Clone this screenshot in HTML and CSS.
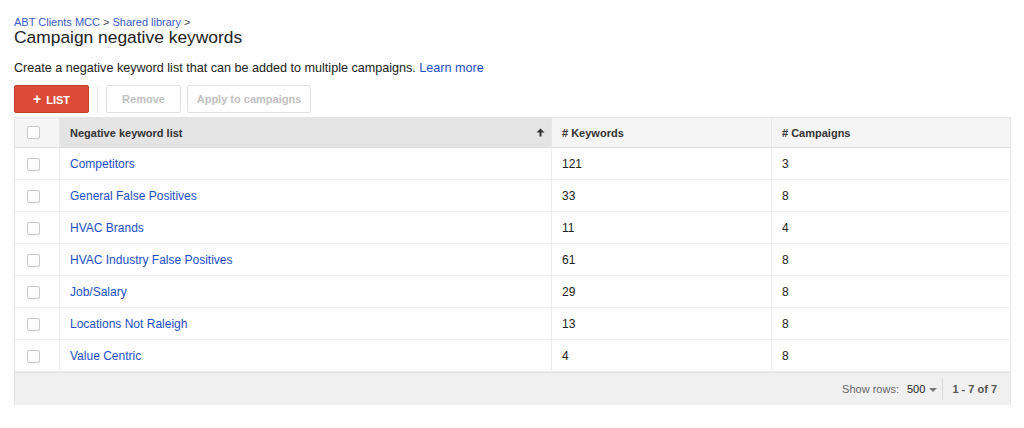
FILE: index.html
```html
<!DOCTYPE html>
<html lang="en">
<head>
  <meta charset="UTF-8">
  <title>Campaign negative keywords</title>
  <link rel="stylesheet" href="styles.css">
</head>
<body>

<div class="page">
  <div class="crumbs"><a href="#">ABT Clients MCC</a> &gt; <a href="#">Shared library</a> &gt;</div>
  <h1>Campaign negative keywords</h1>
  <p class="intro">Create a negative keyword list that can be added to multiple campaigns. <a href="#">Learn more</a></p>

  <div class="toolbar">
    <button class="add-btn"><span class="plus">+</span> LIST</button>
    <span class="divider"></span>
    <button class="plain-btn remove-btn" disabled>Remove</button>
    <button class="plain-btn apply-btn" disabled>Apply to campaigns</button>
  </div>

  <div class="grid-wrap">
    <table class="grid">
      <thead>
        <tr>
          <th class="col-check"><span class="box"></span></th>
          <th class="col-name sorted">
            Negative keyword list
            <svg class="sort" width="9" height="9" viewBox="0 0 9 9"><path d="M4.5 0.5 L8.5 4.5 L5.5 4.5 L5.5 8.5 L3.5 8.5 L3.5 4.5 L0.5 4.5 Z" fill="#333"/></svg>
          </th>
          <th class="col-kw"># Keywords</th>
          <th class="col-camp"># Campaigns</th>
        </tr>
      </thead>
      <tbody>
        <tr><td class="col-check"><span class="box"></span></td><td><a href="#">Competitors</a></td><td>121</td><td>3</td></tr>
        <tr><td class="col-check"><span class="box"></span></td><td><a href="#">General False Positives</a></td><td>33</td><td>8</td></tr>
        <tr><td class="col-check"><span class="box"></span></td><td><a href="#">HVAC Brands</a></td><td>11</td><td>4</td></tr>
        <tr><td class="col-check"><span class="box"></span></td><td><a href="#">HVAC Industry False Positives</a></td><td>61</td><td>8</td></tr>
        <tr><td class="col-check"><span class="box"></span></td><td><a href="#">Job/Salary</a></td><td>29</td><td>8</td></tr>
        <tr><td class="col-check"><span class="box"></span></td><td><a href="#">Locations Not Raleigh</a></td><td>13</td><td>8</td></tr>
        <tr><td class="col-check"><span class="box"></span></td><td><a href="#">Value Centric</a></td><td>4</td><td>8</td></tr>
      </tbody>
    </table>
    <div class="grid-foot">
      <span class="rows-label">Show rows:</span>
      <span class="rows-value">500 <span class="caret"></span></span>
      <span class="foot-sep"></span>
      <span class="range">1 - 7 of 7</span>
    </div>
  </div>
</div>

</body>
</html>
```

FILE: styles.css
```css
body {
  margin: 0;
  font-family: 'Liberation Sans', Arial, sans-serif;
  color: #222;
  background: #fff;
}

a {
  color: #1a4fc7;
  text-decoration: none;
}

.page {
  padding: 15px 15px 0 14px;
}

.crumbs {
  font-size: 11px;
  line-height: 14px;
  color: #444;
}

.crumbs a {
  color: #3a5bc7;
}

h1 {
  margin: -1px 0 0;
  font-size: 17.4px;
  font-weight: normal;
  line-height: 18px;
  color: #222;
}

.intro {
  margin: 14px 0 0;
  font-size: 12.6px;
  line-height: 16px;
  color: #222;
}

.toolbar {
  display: flex;
  align-items: center;
  gap: 6px;
  margin-top: 9px;
  height: 28px;
}

.add-btn {
  width: 75px;
  height: 28px;
  border: 1px solid #c4412f;
  border-radius: 2px;
  background: #dc4a38;
  color: #fff;
  font-family: inherit;
  font-size: 11px;
  font-weight: bold;
  padding: 0;
}

.add-btn .plus {
  font-size: 14px;
  margin-right: 2px;
}

.divider {
  width: 1px;
  height: 27px;
  background: #e5e5e5;
  margin: 0 2px;
}

.plain-btn {
  height: 28px;
  border: 1px solid #e0e0e0;
  border-radius: 2px;
  background: #fff;
  color: #c0c0c0;
  font-family: inherit;
  font-size: 11px;
  font-weight: bold;
  padding: 0;
}

.remove-btn { width: 75px; }
.apply-btn { width: 124px; }

.grid-wrap {
  margin-top: 4px;
  width: 995px;
  border: 1px solid #e5e5e5;
  border-bottom: none;
}

.grid {
  width: 100%;
  border-collapse: collapse;
  font-size: 12px;
}

.grid th {
  height: 29px;
  background: #f5f5f5;
  text-align: left;
  font-size: 11px;
  font-weight: bold;
  color: #333;
  padding: 0 10px;
  border-left: 1px solid #e8e8e8;
  border-bottom: 1px solid #e0e0e0;
}

.grid th.sorted {
  background: #e4e4e4;
  position: relative;
}

.grid .sort {
  position: absolute;
  right: 6px;
  top: 10px;
}

.grid td {
  height: 31px;
  padding: 0 10px;
  border-left: 1px solid #ececec;
  border-bottom: 1px solid #f0f0f0;
  color: #222;
}

.grid .col-check {
  width: 32px;
  padding: 0 0 0 12px;
  text-align: left;
  border-left: none;
}

.grid th.col-name { width: 471px; }
.grid th.col-kw { width: 199px; }

.box {
  display: inline-block;
  width: 11px;
  height: 11px;
  border: 1px solid #c8c8c8;
  border-radius: 2px;
  background: #fff;
  vertical-align: middle;
}

.grid-foot {
  display: flex;
  align-items: center;
  justify-content: flex-end;
  height: 32px;
  background: #f0f0f0;
  border-top: 1px solid #e0e0e0;
  font-size: 11px;
  padding-right: 13px;
}

.rows-label {
  color: #666;
  margin-right: 8px;
}

.rows-value {
  color: #222;
}

.caret {
  display: inline-block;
  width: 0;
  height: 0;
  border-left: 4px solid transparent;
  border-right: 4px solid transparent;
  border-top: 4px solid #777;
  vertical-align: middle;
  margin-left: 1px;
}

.foot-sep {
  width: 1px;
  height: 22px;
  background: #dcdcdc;
  margin: 0 9px 0 5px;
}

.range {
  color: #555;
  font-weight: bold;
}
```
